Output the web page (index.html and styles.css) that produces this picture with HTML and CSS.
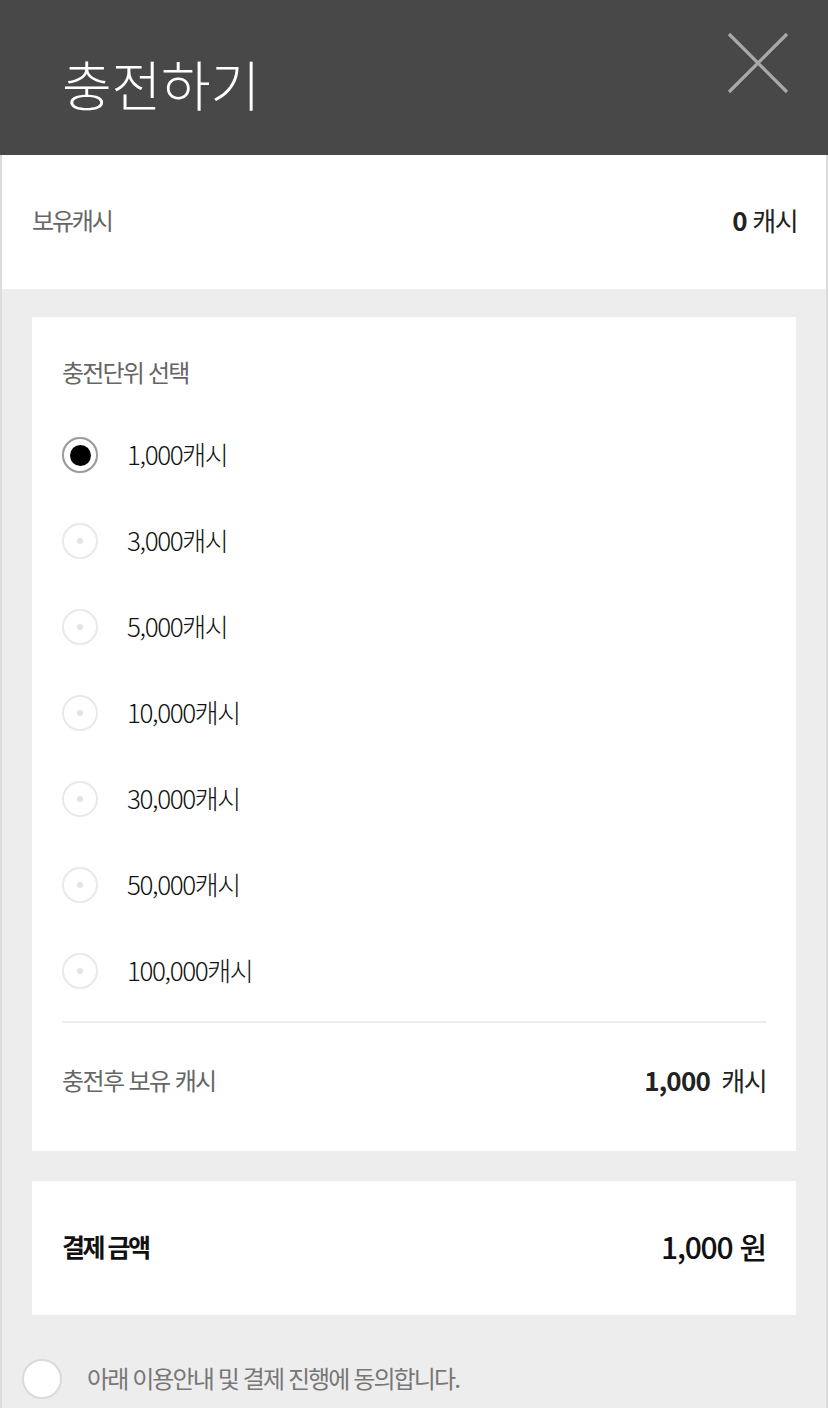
FILE: index.html
```html
<!DOCTYPE html>
<html lang="ko">
<head>
<meta charset="utf-8">
<title>충전하기</title>
<link rel="stylesheet" href="styles.css">
</head>
<body>
<header class="topbar">
  <h1 class="title">충전하기</h1>
  <button class="close" aria-label="닫기">
    <svg width="62" height="62" viewBox="0 0 62 62"><path d="M2 2 L60 60 M60 2 L2 60" stroke="#a9a9a9" stroke-width="3.2" fill="none"/></svg>
  </button>
</header>
<main class="page">
  <section class="balance">
    <span class="muted">보유캐시</span>
    <span class="value"><b>0</b> 캐시</span>
  </section>
  <section class="gray">
    <div class="card units">
      <div class="card-title">충전단위 선택</div>
      <ul class="options">
        <li class="option"><span class="radio on"></span><span class="label">1,000캐시</span></li>
        <li class="option"><span class="radio"></span><span class="label">3,000캐시</span></li>
        <li class="option"><span class="radio"></span><span class="label">5,000캐시</span></li>
        <li class="option"><span class="radio"></span><span class="label">10,000캐시</span></li>
        <li class="option"><span class="radio"></span><span class="label">30,000캐시</span></li>
        <li class="option"><span class="radio"></span><span class="label">50,000캐시</span></li>
        <li class="option"><span class="radio"></span><span class="label">100,000캐시</span></li>
      </ul>
      <div class="divider"></div>
      <div class="after">
        <span class="muted wide">충전후 보유 캐시</span>
        <span class="value"><b>1,000</b>&nbsp; 캐시</span>
      </div>
    </div>
    <div class="card pay">
      <span class="pay-label">결제 금액</span>
      <span class="pay-value">1,000 원</span>
    </div>
    <div class="agree">
      <span class="check"></span>
      <span class="agree-text">아래 이용안내 및 결제 진행에 동의합니다.</span>
    </div>
  </section>
</main>
</body>
</html>
```

FILE: styles.css
```css
* { box-sizing: border-box; }
html, body { margin: 0; padding: 0; }
body {
  width: 828px;
  min-height: 1408px;
  background: #ededed;
  font-family: "Noto Sans CJK KR", "Noto Sans", sans-serif;
  color: #222;
}
.topbar {
  height: 155px;
  background: #484848;
  display: flex;
  align-items: center;
  justify-content: space-between;
  padding: 0 39px 0 62px;
}
.title {
  margin: 0;
  font-size: 54px;
  font-weight: 300;
  color: #fff;
  letter-spacing: -0.2px;
  line-height: 1;
  padding-top: 12px;
}
.close {
  border: 0;
  background: none;
  padding: 0;
  margin-top: -30px;
  display: flex;
}
.page {
  border-left: 2px solid #dcdcdc;
  border-right: 2px solid #dcdcdc;
  min-height: 1253px;
}
.balance {
  height: 134px;
  background: #fff;
  display: flex;
  align-items: center;
  justify-content: space-between;
  padding: 0 29px 0 30px;
}
.balance > span { margin-top: -5px; }
.muted {
  font-size: 24px;
  color: #666;
  letter-spacing: -2.2px;
}
.muted.wide { letter-spacing: -1.6px; }
.value {
  font-size: 26px;
  color: #222;
  letter-spacing: -1.6px;
}
.value b { font-weight: 700; letter-spacing: -0.8px; }
.gray {
  background: #ededed;
  padding: 28px 30px 0;
}
.card {
  background: #fff;
}
.units {
  padding: 40px 30px 57px;
}
.card-title {
  font-size: 24px;
  line-height: 30px;
  color: #666;
  letter-spacing: -1.8px;
}
.options {
  list-style: none;
  margin: 25px 0 0;
  padding: 0;
}
.option {
  height: 86px;
  display: flex;
  align-items: center;
}
.radio {
  width: 36px;
  height: 36px;
  border-radius: 50%;
  border: 2px solid #e9e9e9;
  display: flex;
  align-items: center;
  justify-content: center;
}
.radio::after {
  content: "";
  width: 6px;
  height: 6px;
  border-radius: 50%;
  background: #e2e2e2;
}
.radio.on {
  border-color: #9a9a9a;
  box-shadow: 0 0 1px #bbb;
}
.radio.on::after {
  width: 21px;
  height: 21px;
  background: #000;
}
.label {
  margin-left: 29px;
  margin-top: -4px;
  font-size: 26px;
  font-weight: 300;
  color: #111;
  letter-spacing: -1.4px;
}
.divider {
  height: 2px;
  background: #ececec;
  margin-top: 7px;
}
.after {
  margin-top: 41px;
  height: 30px;
  display: flex;
  align-items: center;
  justify-content: space-between;
}
.pay {
  margin-top: 30px;
  height: 134px;
  display: flex;
  align-items: center;
  justify-content: space-between;
  padding: 0 30px;
}
.pay > span { margin-top: -4px; }
.pay-label {
  font-size: 25px;
  font-weight: 700;
  color: #111;
  letter-spacing: -2.5px;
}
.pay-value {
  font-size: 30px;
  font-weight: 500;
  color: #111;
  letter-spacing: -1.2px;
}
.agree {
  display: flex;
  align-items: center;
  margin: 44px 0 0 -10px;
}
.check {
  width: 40px;
  height: 40px;
  border-radius: 50%;
  background: #fff;
  border: 2px solid #dadada;
}
.agree-text {
  margin-left: 25px;
  margin-top: -3px;
  font-size: 24px;
  color: #777;
  letter-spacing: -1.9px;
}
```
